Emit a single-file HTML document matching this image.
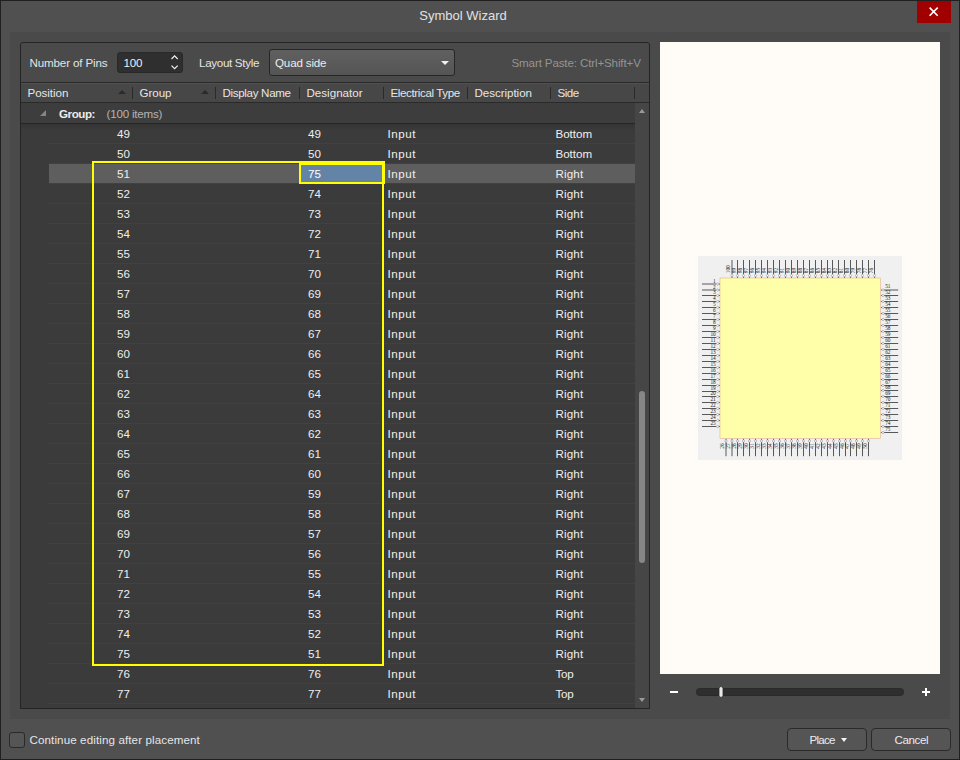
<!DOCTYPE html>
<html lang="en"><head><meta charset="utf-8"><title>Symbol Wizard</title>
<style>
*{box-sizing:border-box;margin:0;padding:0}
html,body{width:960px;height:760px;overflow:hidden}
body{position:relative;background:#505050;font-family:"Liberation Sans","DejaVu Sans",sans-serif;font-size:11.6px;color:#e4e4e4;}
.abs{position:absolute}
#winb{position:absolute;left:0;top:0;width:960px;height:760px;border:1px solid #202020;pointer-events:none;z-index:50}
#title{position:absolute;left:419px;top:7px;width:88px;height:17px;line-height:17px;font-size:13px;color:#e2e2e2;white-space:nowrap;text-align:center}
#close{position:absolute;left:917px;top:1px;width:34px;height:22px;background:#a00000}
#inner{position:absolute;left:10px;top:32px;width:940px;height:687px;background:#4a4a4a}
#panel{position:absolute;left:20px;top:42px;width:630px;height:667px;border:1px solid #242424;border-radius:3px 3px 0 0;background:#3b3b3b;overflow:hidden}
/* inside panel coordinates are page coords minus (21,43) */
#pin{position:absolute;left:-21px;top:-43px;width:960px;height:760px}
#toolbar{position:absolute;left:21px;top:43px;width:628px;height:39px;background:#4a4a4a}
#tline{position:absolute;left:21px;top:82px;width:628px;height:1px;background:#2a2a2a}
#header{position:absolute;left:21px;top:83px;width:628px;height:19px;background:#474747;border-top:1px solid #525252}
#hline{position:absolute;left:21px;top:102px;width:628px;height:1px;background:#2a2a2a}
#grow{position:absolute;left:21px;top:103px;width:614px;height:20px;background:#3d3d3d}
#gline{position:absolute;left:21px;top:123px;width:614px;height:1px;background:#252525}
#sbar{position:absolute;left:635px;top:103px;width:14px;height:605px;background:#464646}
#thumb{position:absolute;left:639px;top:391px;width:6px;height:172px;border-radius:3px;background:#868686}
.lbl{position:absolute;white-space:nowrap;height:20px;line-height:20px}
.hl{position:absolute;top:83px;height:19px;line-height:19px;white-space:nowrap;color:#e6e6e6}
.sep{position:absolute;top:87px;width:1px;height:12px;background:#2a2a2a}
.sarr{position:absolute;top:90px;width:0;height:0;border-left:4px solid transparent;border-right:4px solid transparent;border-bottom:4px solid #2a2a2a}
.row{position:absolute;left:49px;width:586px;height:20px;border-bottom:1px solid #414141;line-height:19px;color:#efefef}
#shade{position:absolute;left:21px;top:124px;width:614px;height:7px;background:linear-gradient(#353535,#3b3b3b)}
.row.sel{background:linear-gradient(#5e5e5e,#5e5e5e) 0 0/100% 19px no-repeat}
.row span{position:absolute;top:1px;white-space:nowrap}
.row span{top:0}
.c-pos{right:505px;text-align:right}
.c-des{left:259px}
.c-typ{left:338.4px;letter-spacing:0.55px}
.c-side{left:506.5px}
#ybox{position:absolute;left:92px;top:161px;width:292px;height:504.5px;border:2px solid #ffff00}
#ycell{position:absolute;left:299px;top:161px;width:86px;height:23px;border:2px solid #ffff00;border-top-width:4px;border-right-width:3px;background:#6384a6}
#preview{position:absolute;left:660px;top:42px;width:280px;height:632px;background:#fffcf8}
#preview svg{position:absolute;left:0;top:0}
#preview line{stroke:#585858;stroke-width:1}
#preview circle{fill:#fff;stroke:#777;stroke-width:0.45}
#preview text{font-family:"Liberation Serif",serif;font-size:5.3px;fill:#1a1a1a}
#track{position:absolute;left:696px;top:688px;width:208px;height:8px;border-radius:3.5px;background:#2f2f2f;border:1px solid #2a2a2a}
#knob{position:absolute;left:718.5px;top:686.4px;width:5px;height:11px;border-radius:2.5px;background:#e8e8e8;border:1px solid #2c2c2c}
.btn{position:absolute;top:728px;height:23px;width:80px;border:1px solid #2a2a2a;border-radius:4px;background:#555;color:#ececec}
.btn span{position:absolute;top:0px;height:21px;line-height:21px;white-space:nowrap}
#cb{position:absolute;left:9px;top:732px;width:16px;height:16px;border:1px solid #2a2a2a;border-radius:3px;background:#555}
</style></head><body>
<div id="title">Symbol Wizard</div>
<div id="close"><svg width="34" height="22" viewBox="0 0 34 22"><path d="M12.6 6.6 L20.7 14.7 M20.7 6.6 L12.6 14.7" stroke="#fff" stroke-width="1.6" fill="none"/></svg></div>
<div id="inner"></div>
<div id="panel"><div id="pin">
<div id="toolbar"></div><div id="tline"></div>
<div class="lbl" id="l-nop" style="letter-spacing:-0.14px;left:29.5px;top:53px">Number of Pins</div>
<div class="abs" id="spin" style="left:117px;top:52px;width:66px;height:21px;border:1px solid #282828;border-radius:3px;background:#2f2f2f"></div>
<div class="lbl" id="l-100" style="font-size:11.6px;letter-spacing:-0.2px;left:123.6px;top:53px;color:#f0f0f0">100</div>
<svg class="abs" style="left:170px;top:54px" width="10" height="17" viewBox="0 0 10 17"><path d="M1.5 5.0 L4.6 1.9 L7.7 5.0 M1.5 11.6 L4.6 14.7 L7.7 11.6" stroke="#f2f2f2" stroke-width="1.2" fill="none"/></svg>
<div class="lbl" id="l-ls" style="letter-spacing:-0.31px;left:199px;top:53px">Layout Style</div>
<div class="abs" id="sel" style="left:269px;top:49px;width:186px;height:27px;border:1px solid #262626;border-radius:3px;background:linear-gradient(#606060,#555)"></div>
<div class="lbl" id="l-qs" style="letter-spacing:-0.16px;left:275px;top:53px;color:#ececec">Quad side</div>
<div class="abs" style="left:441px;top:61px;width:0;height:0;border-left:4px solid transparent;border-right:4px solid transparent;border-top:4.5px solid #f0f0f0"></div>
<div class="lbl" id="l-sp" style="letter-spacing:-0.14px;left:511.5px;top:53px;color:#949494">Smart Paste: Ctrl+Shift+V</div>
<div id="header"></div><div id="hline"></div>
<div class="hl" id="h1" style="letter-spacing:-0.06px;left:27.5px">Position</div>
<div class="hl" id="h2" style="letter-spacing:-0.06px;left:139.5px">Group</div>
<div class="hl" id="h3" style="letter-spacing:-0.33px;left:222.5px">Display Name</div>
<div class="hl" id="h4" style="letter-spacing:0.00px;left:306.5px">Designator</div>
<div class="hl" id="h5" style="letter-spacing:-0.39px;left:390.5px">Electrical Type</div>
<div class="hl" id="h6" style="letter-spacing:-0.05px;left:474.5px">Description</div>
<div class="hl" id="h7" style="letter-spacing:-0.47px;left:557.5px">Side</div>
<div class="sep" style="left:132px"></div><div class="sep" style="left:215px"></div><div class="sep" style="left:299px"></div>
<div class="sep" style="left:383px"></div><div class="sep" style="left:467px"></div><div class="sep" style="left:550px"></div><div class="sep" style="left:634px"></div>
<div class="sarr" style="left:118px"></div><div class="sarr" style="left:201px"></div>
<div id="grow"></div><div id="gline"></div><div id="shade"></div>
<div class="abs" style="left:40px;top:110px;width:0;height:0;border-left:6px solid transparent;border-bottom:6px solid #858585"></div>
<div class="lbl" id="l-g" style="letter-spacing:-0.44px;left:59px;top:104px;font-weight:bold;color:#ececec">Group:</div>
<div class="lbl" id="l-gi" style="letter-spacing:-0.20px;left:106.5px;top:104px;color:#b4b4b4">(100 items)</div>
<div id="sbar"></div><div id="thumb"></div>
<div class="abs" style="left:639px;top:109px;width:0;height:0;border-left:3.5px solid transparent;border-right:3.5px solid transparent;border-bottom:4px solid #9a9a9a"></div>
<div class="abs" style="left:639px;top:698px;width:0;height:0;border-left:3.5px solid transparent;border-right:3.5px solid transparent;border-top:4px solid #9a9a9a"></div>
<div class="row first" style="top:124px"><span class="c-pos">49</span><span class="c-des">49</span><span class="c-typ">Input</span><span class="c-side" style="letter-spacing:-0.03px">Bottom</span></div>
<div class="row" style="top:144px"><span class="c-pos">50</span><span class="c-des">50</span><span class="c-typ">Input</span><span class="c-side" style="letter-spacing:-0.03px">Bottom</span></div>
<div class="row sel" style="top:164px"><span class="c-pos">51</span><span class="c-des">75</span><span class="c-typ">Input</span><span class="c-side" style="letter-spacing:0.14px">Right</span></div>
<div class="row" style="top:184px"><span class="c-pos">52</span><span class="c-des">74</span><span class="c-typ">Input</span><span class="c-side" style="letter-spacing:0.14px">Right</span></div>
<div class="row" style="top:204px"><span class="c-pos">53</span><span class="c-des">73</span><span class="c-typ">Input</span><span class="c-side" style="letter-spacing:0.14px">Right</span></div>
<div class="row" style="top:224px"><span class="c-pos">54</span><span class="c-des">72</span><span class="c-typ">Input</span><span class="c-side" style="letter-spacing:0.14px">Right</span></div>
<div class="row" style="top:244px"><span class="c-pos">55</span><span class="c-des">71</span><span class="c-typ">Input</span><span class="c-side" style="letter-spacing:0.14px">Right</span></div>
<div class="row" style="top:264px"><span class="c-pos">56</span><span class="c-des">70</span><span class="c-typ">Input</span><span class="c-side" style="letter-spacing:0.14px">Right</span></div>
<div class="row" style="top:284px"><span class="c-pos">57</span><span class="c-des">69</span><span class="c-typ">Input</span><span class="c-side" style="letter-spacing:0.14px">Right</span></div>
<div class="row" style="top:304px"><span class="c-pos">58</span><span class="c-des">68</span><span class="c-typ">Input</span><span class="c-side" style="letter-spacing:0.14px">Right</span></div>
<div class="row" style="top:324px"><span class="c-pos">59</span><span class="c-des">67</span><span class="c-typ">Input</span><span class="c-side" style="letter-spacing:0.14px">Right</span></div>
<div class="row" style="top:344px"><span class="c-pos">60</span><span class="c-des">66</span><span class="c-typ">Input</span><span class="c-side" style="letter-spacing:0.14px">Right</span></div>
<div class="row" style="top:364px"><span class="c-pos">61</span><span class="c-des">65</span><span class="c-typ">Input</span><span class="c-side" style="letter-spacing:0.14px">Right</span></div>
<div class="row" style="top:384px"><span class="c-pos">62</span><span class="c-des">64</span><span class="c-typ">Input</span><span class="c-side" style="letter-spacing:0.14px">Right</span></div>
<div class="row" style="top:404px"><span class="c-pos">63</span><span class="c-des">63</span><span class="c-typ">Input</span><span class="c-side" style="letter-spacing:0.14px">Right</span></div>
<div class="row" style="top:424px"><span class="c-pos">64</span><span class="c-des">62</span><span class="c-typ">Input</span><span class="c-side" style="letter-spacing:0.14px">Right</span></div>
<div class="row" style="top:444px"><span class="c-pos">65</span><span class="c-des">61</span><span class="c-typ">Input</span><span class="c-side" style="letter-spacing:0.14px">Right</span></div>
<div class="row" style="top:464px"><span class="c-pos">66</span><span class="c-des">60</span><span class="c-typ">Input</span><span class="c-side" style="letter-spacing:0.14px">Right</span></div>
<div class="row" style="top:484px"><span class="c-pos">67</span><span class="c-des">59</span><span class="c-typ">Input</span><span class="c-side" style="letter-spacing:0.14px">Right</span></div>
<div class="row" style="top:504px"><span class="c-pos">68</span><span class="c-des">58</span><span class="c-typ">Input</span><span class="c-side" style="letter-spacing:0.14px">Right</span></div>
<div class="row" style="top:524px"><span class="c-pos">69</span><span class="c-des">57</span><span class="c-typ">Input</span><span class="c-side" style="letter-spacing:0.14px">Right</span></div>
<div class="row" style="top:544px"><span class="c-pos">70</span><span class="c-des">56</span><span class="c-typ">Input</span><span class="c-side" style="letter-spacing:0.14px">Right</span></div>
<div class="row" style="top:564px"><span class="c-pos">71</span><span class="c-des">55</span><span class="c-typ">Input</span><span class="c-side" style="letter-spacing:0.14px">Right</span></div>
<div class="row" style="top:584px"><span class="c-pos">72</span><span class="c-des">54</span><span class="c-typ">Input</span><span class="c-side" style="letter-spacing:0.14px">Right</span></div>
<div class="row" style="top:604px"><span class="c-pos">73</span><span class="c-des">53</span><span class="c-typ">Input</span><span class="c-side" style="letter-spacing:0.14px">Right</span></div>
<div class="row" style="top:624px"><span class="c-pos">74</span><span class="c-des">52</span><span class="c-typ">Input</span><span class="c-side" style="letter-spacing:0.14px">Right</span></div>
<div class="row" style="top:644px"><span class="c-pos">75</span><span class="c-des">51</span><span class="c-typ">Input</span><span class="c-side" style="letter-spacing:0.14px">Right</span></div>
<div class="row" style="top:664px"><span class="c-pos">76</span><span class="c-des">76</span><span class="c-typ">Input</span><span class="c-side" style="letter-spacing:-0.23px">Top</span></div>
<div class="row" style="top:684px"><span class="c-pos">77</span><span class="c-des">77</span><span class="c-typ">Input</span><span class="c-side" style="letter-spacing:-0.23px">Top</span></div>
<div id="ycell"></div>
<div id="ybox"></div>
<div class="lbl" id="l-75" style="font-size:11.6px;left:308px;top:164px;color:#fff">75</div>
</div></div>
<div id="preview"><svg width="280" height="632" viewBox="0 0 280 632">
<rect x="38" y="214" width="204" height="204" fill="#f0f0f0"/>
<line x1="42" y1="242.00" x2="56.4" y2="242.00"/>
<circle cx="57.7" cy="242.00" r="1.1"/>
<line class="d" x1="58.9" y1="242.00" x2="60" y2="242.00"/>
<text x="55.7" y="240.50" text-anchor="end">1</text>
<line x1="42" y1="248.00" x2="56.4" y2="248.00"/>
<circle cx="57.7" cy="248.00" r="1.1"/>
<line class="d" x1="58.9" y1="248.00" x2="60" y2="248.00"/>
<text x="55.7" y="246.50" text-anchor="end">2</text>
<line x1="42" y1="253.50" x2="56.4" y2="253.50"/>
<circle cx="57.7" cy="253.50" r="1.1"/>
<line class="d" x1="58.9" y1="253.50" x2="60" y2="253.50"/>
<text x="55.7" y="252.00" text-anchor="end">3</text>
<line x1="42" y1="259.50" x2="56.4" y2="259.50"/>
<circle cx="57.7" cy="259.50" r="1.1"/>
<line class="d" x1="58.9" y1="259.50" x2="60" y2="259.50"/>
<text x="55.7" y="258.00" text-anchor="end">4</text>
<line x1="42" y1="265.50" x2="56.4" y2="265.50"/>
<circle cx="57.7" cy="265.50" r="1.1"/>
<line class="d" x1="58.9" y1="265.50" x2="60" y2="265.50"/>
<text x="55.7" y="264.00" text-anchor="end">5</text>
<line x1="42" y1="271.50" x2="56.4" y2="271.50"/>
<circle cx="57.7" cy="271.50" r="1.1"/>
<line class="d" x1="58.9" y1="271.50" x2="60" y2="271.50"/>
<text x="55.7" y="270.00" text-anchor="end">6</text>
<line x1="42" y1="277.50" x2="56.4" y2="277.50"/>
<circle cx="57.7" cy="277.50" r="1.1"/>
<line class="d" x1="58.9" y1="277.50" x2="60" y2="277.50"/>
<text x="55.7" y="276.00" text-anchor="end">7</text>
<line x1="42" y1="283.50" x2="56.4" y2="283.50"/>
<circle cx="57.7" cy="283.50" r="1.1"/>
<line class="d" x1="58.9" y1="283.50" x2="60" y2="283.50"/>
<text x="55.7" y="282.00" text-anchor="end">8</text>
<line x1="42" y1="289.50" x2="56.4" y2="289.50"/>
<circle cx="57.7" cy="289.50" r="1.1"/>
<line class="d" x1="58.9" y1="289.50" x2="60" y2="289.50"/>
<text x="55.7" y="288.00" text-anchor="end">9</text>
<line x1="42" y1="295.50" x2="56.4" y2="295.50"/>
<circle cx="57.7" cy="295.50" r="1.1"/>
<line class="d" x1="58.9" y1="295.50" x2="60" y2="295.50"/>
<text x="55.7" y="294.00" text-anchor="end">10</text>
<line x1="42" y1="301.50" x2="56.4" y2="301.50"/>
<circle cx="57.7" cy="301.50" r="1.1"/>
<line class="d" x1="58.9" y1="301.50" x2="60" y2="301.50"/>
<text x="55.7" y="300.00" text-anchor="end">11</text>
<line x1="42" y1="307.50" x2="56.4" y2="307.50"/>
<circle cx="57.7" cy="307.50" r="1.1"/>
<line class="d" x1="58.9" y1="307.50" x2="60" y2="307.50"/>
<text x="55.7" y="306.00" text-anchor="end">12</text>
<line x1="42" y1="313.50" x2="56.4" y2="313.50"/>
<circle cx="57.7" cy="313.50" r="1.1"/>
<line class="d" x1="58.9" y1="313.50" x2="60" y2="313.50"/>
<text x="55.7" y="312.00" text-anchor="end">13</text>
<line x1="42" y1="319.50" x2="56.4" y2="319.50"/>
<circle cx="57.7" cy="319.50" r="1.1"/>
<line class="d" x1="58.9" y1="319.50" x2="60" y2="319.50"/>
<text x="55.7" y="318.00" text-anchor="end">14</text>
<line x1="42" y1="325.50" x2="56.4" y2="325.50"/>
<circle cx="57.7" cy="325.50" r="1.1"/>
<line class="d" x1="58.9" y1="325.50" x2="60" y2="325.50"/>
<text x="55.7" y="324.00" text-anchor="end">15</text>
<line x1="42" y1="331.50" x2="56.4" y2="331.50"/>
<circle cx="57.7" cy="331.50" r="1.1"/>
<line class="d" x1="58.9" y1="331.50" x2="60" y2="331.50"/>
<text x="55.7" y="330.00" text-anchor="end">16</text>
<line x1="42" y1="337.50" x2="56.4" y2="337.50"/>
<circle cx="57.7" cy="337.50" r="1.1"/>
<line class="d" x1="58.9" y1="337.50" x2="60" y2="337.50"/>
<text x="55.7" y="336.00" text-anchor="end">17</text>
<line x1="42" y1="343.50" x2="56.4" y2="343.50"/>
<circle cx="57.7" cy="343.50" r="1.1"/>
<line class="d" x1="58.9" y1="343.50" x2="60" y2="343.50"/>
<text x="55.7" y="342.00" text-anchor="end">18</text>
<line x1="42" y1="349.50" x2="56.4" y2="349.50"/>
<circle cx="57.7" cy="349.50" r="1.1"/>
<line class="d" x1="58.9" y1="349.50" x2="60" y2="349.50"/>
<text x="55.7" y="348.00" text-anchor="end">19</text>
<line x1="42" y1="354.50" x2="56.4" y2="354.50"/>
<circle cx="57.7" cy="354.50" r="1.1"/>
<line class="d" x1="58.9" y1="354.50" x2="60" y2="354.50"/>
<text x="55.7" y="353.00" text-anchor="end">20</text>
<line x1="42" y1="360.50" x2="56.4" y2="360.50"/>
<circle cx="57.7" cy="360.50" r="1.1"/>
<line class="d" x1="58.9" y1="360.50" x2="60" y2="360.50"/>
<text x="55.7" y="359.00" text-anchor="end">21</text>
<line x1="42" y1="366.50" x2="56.4" y2="366.50"/>
<circle cx="57.7" cy="366.50" r="1.1"/>
<line class="d" x1="58.9" y1="366.50" x2="60" y2="366.50"/>
<text x="55.7" y="365.00" text-anchor="end">22</text>
<line x1="42" y1="372.50" x2="56.4" y2="372.50"/>
<circle cx="57.7" cy="372.50" r="1.1"/>
<line class="d" x1="58.9" y1="372.50" x2="60" y2="372.50"/>
<text x="55.7" y="371.00" text-anchor="end">23</text>
<line x1="42" y1="378.50" x2="56.4" y2="378.50"/>
<circle cx="57.7" cy="378.50" r="1.1"/>
<line class="d" x1="58.9" y1="378.50" x2="60" y2="378.50"/>
<text x="55.7" y="377.00" text-anchor="end">24</text>
<line x1="42" y1="384.50" x2="56.4" y2="384.50"/>
<circle cx="57.7" cy="384.50" r="1.1"/>
<line class="d" x1="58.9" y1="384.50" x2="60" y2="384.50"/>
<text x="55.7" y="383.00" text-anchor="end">25</text>
<line x1="224.2" y1="248.00" x2="238.2" y2="248.00"/>
<circle cx="223.0" cy="248.00" r="1.1"/>
<line class="d" x1="220.7" y1="248.00" x2="221.8" y2="248.00"/>
<text x="225.2" y="246.40">51</text>
<line x1="224.2" y1="253.50" x2="238.2" y2="253.50"/>
<circle cx="223.0" cy="253.50" r="1.1"/>
<line class="d" x1="220.7" y1="253.50" x2="221.8" y2="253.50"/>
<text x="225.2" y="251.90">52</text>
<line x1="224.2" y1="259.50" x2="238.2" y2="259.50"/>
<circle cx="223.0" cy="259.50" r="1.1"/>
<line class="d" x1="220.7" y1="259.50" x2="221.8" y2="259.50"/>
<text x="225.2" y="257.90">53</text>
<line x1="224.2" y1="265.50" x2="238.2" y2="265.50"/>
<circle cx="223.0" cy="265.50" r="1.1"/>
<line class="d" x1="220.7" y1="265.50" x2="221.8" y2="265.50"/>
<text x="225.2" y="263.90">54</text>
<line x1="224.2" y1="271.50" x2="238.2" y2="271.50"/>
<circle cx="223.0" cy="271.50" r="1.1"/>
<line class="d" x1="220.7" y1="271.50" x2="221.8" y2="271.50"/>
<text x="225.2" y="269.90">55</text>
<line x1="224.2" y1="277.50" x2="238.2" y2="277.50"/>
<circle cx="223.0" cy="277.50" r="1.1"/>
<line class="d" x1="220.7" y1="277.50" x2="221.8" y2="277.50"/>
<text x="225.2" y="275.90">56</text>
<line x1="224.2" y1="283.50" x2="238.2" y2="283.50"/>
<circle cx="223.0" cy="283.50" r="1.1"/>
<line class="d" x1="220.7" y1="283.50" x2="221.8" y2="283.50"/>
<text x="225.2" y="281.90">57</text>
<line x1="224.2" y1="289.50" x2="238.2" y2="289.50"/>
<circle cx="223.0" cy="289.50" r="1.1"/>
<line class="d" x1="220.7" y1="289.50" x2="221.8" y2="289.50"/>
<text x="225.2" y="287.90">58</text>
<line x1="224.2" y1="295.50" x2="238.2" y2="295.50"/>
<circle cx="223.0" cy="295.50" r="1.1"/>
<line class="d" x1="220.7" y1="295.50" x2="221.8" y2="295.50"/>
<text x="225.2" y="293.90">59</text>
<line x1="224.2" y1="301.50" x2="238.2" y2="301.50"/>
<circle cx="223.0" cy="301.50" r="1.1"/>
<line class="d" x1="220.7" y1="301.50" x2="221.8" y2="301.50"/>
<text x="225.2" y="299.90">60</text>
<line x1="224.2" y1="307.50" x2="238.2" y2="307.50"/>
<circle cx="223.0" cy="307.50" r="1.1"/>
<line class="d" x1="220.7" y1="307.50" x2="221.8" y2="307.50"/>
<text x="225.2" y="305.90">61</text>
<line x1="224.2" y1="313.50" x2="238.2" y2="313.50"/>
<circle cx="223.0" cy="313.50" r="1.1"/>
<line class="d" x1="220.7" y1="313.50" x2="221.8" y2="313.50"/>
<text x="225.2" y="311.90">62</text>
<line x1="224.2" y1="319.50" x2="238.2" y2="319.50"/>
<circle cx="223.0" cy="319.50" r="1.1"/>
<line class="d" x1="220.7" y1="319.50" x2="221.8" y2="319.50"/>
<text x="225.2" y="317.90">63</text>
<line x1="224.2" y1="325.50" x2="238.2" y2="325.50"/>
<circle cx="223.0" cy="325.50" r="1.1"/>
<line class="d" x1="220.7" y1="325.50" x2="221.8" y2="325.50"/>
<text x="225.2" y="323.90">64</text>
<line x1="224.2" y1="331.50" x2="238.2" y2="331.50"/>
<circle cx="223.0" cy="331.50" r="1.1"/>
<line class="d" x1="220.7" y1="331.50" x2="221.8" y2="331.50"/>
<text x="225.2" y="329.90">65</text>
<line x1="224.2" y1="337.50" x2="238.2" y2="337.50"/>
<circle cx="223.0" cy="337.50" r="1.1"/>
<line class="d" x1="220.7" y1="337.50" x2="221.8" y2="337.50"/>
<text x="225.2" y="335.90">66</text>
<line x1="224.2" y1="343.50" x2="238.2" y2="343.50"/>
<circle cx="223.0" cy="343.50" r="1.1"/>
<line class="d" x1="220.7" y1="343.50" x2="221.8" y2="343.50"/>
<text x="225.2" y="341.90">67</text>
<line x1="224.2" y1="348.50" x2="238.2" y2="348.50"/>
<circle cx="223.0" cy="348.50" r="1.1"/>
<line class="d" x1="220.7" y1="348.50" x2="221.8" y2="348.50"/>
<text x="225.2" y="346.90">68</text>
<line x1="224.2" y1="354.50" x2="238.2" y2="354.50"/>
<circle cx="223.0" cy="354.50" r="1.1"/>
<line class="d" x1="220.7" y1="354.50" x2="221.8" y2="354.50"/>
<text x="225.2" y="352.90">69</text>
<line x1="224.2" y1="360.50" x2="238.2" y2="360.50"/>
<circle cx="223.0" cy="360.50" r="1.1"/>
<line class="d" x1="220.7" y1="360.50" x2="221.8" y2="360.50"/>
<text x="225.2" y="358.90">70</text>
<line x1="224.2" y1="366.50" x2="238.2" y2="366.50"/>
<circle cx="223.0" cy="366.50" r="1.1"/>
<line class="d" x1="220.7" y1="366.50" x2="221.8" y2="366.50"/>
<text x="225.2" y="364.90">71</text>
<line x1="224.2" y1="372.50" x2="238.2" y2="372.50"/>
<circle cx="223.0" cy="372.50" r="1.1"/>
<line class="d" x1="220.7" y1="372.50" x2="221.8" y2="372.50"/>
<text x="225.2" y="370.90">72</text>
<line x1="224.2" y1="378.50" x2="238.2" y2="378.50"/>
<circle cx="223.0" cy="378.50" r="1.1"/>
<line class="d" x1="220.7" y1="378.50" x2="221.8" y2="378.50"/>
<text x="225.2" y="376.90">73</text>
<line x1="224.2" y1="384.50" x2="238.2" y2="384.50"/>
<circle cx="223.0" cy="384.50" r="1.1"/>
<line class="d" x1="220.7" y1="384.50" x2="221.8" y2="384.50"/>
<text x="225.2" y="382.90">74</text>
<line x1="224.2" y1="390.50" x2="238.2" y2="390.50"/>
<circle cx="223.0" cy="390.50" r="1.1"/>
<line class="d" x1="220.7" y1="390.50" x2="221.8" y2="390.50"/>
<text x="225.2" y="388.90">75</text>
<line x1="72.00" y1="218" x2="72.00" y2="232.4"/>
<circle cx="72.00" cy="233.6" r="1.1"/>
<line class="d" x1="72.00" y1="234.8" x2="72.00" y2="236"/>
<text transform="translate(70.30,231.2) rotate(-90)">100</text>
<line x1="77.50" y1="218" x2="77.50" y2="232.4"/>
<circle cx="77.50" cy="233.6" r="1.1"/>
<line class="d" x1="77.50" y1="234.8" x2="77.50" y2="236"/>
<text transform="translate(75.80,231.2) rotate(-90)">99</text>
<line x1="83.50" y1="218" x2="83.50" y2="232.4"/>
<circle cx="83.50" cy="233.6" r="1.1"/>
<line class="d" x1="83.50" y1="234.8" x2="83.50" y2="236"/>
<text transform="translate(81.80,231.2) rotate(-90)">98</text>
<line x1="89.50" y1="218" x2="89.50" y2="232.4"/>
<circle cx="89.50" cy="233.6" r="1.1"/>
<line class="d" x1="89.50" y1="234.8" x2="89.50" y2="236"/>
<text transform="translate(87.80,231.2) rotate(-90)">97</text>
<line x1="95.50" y1="218" x2="95.50" y2="232.4"/>
<circle cx="95.50" cy="233.6" r="1.1"/>
<line class="d" x1="95.50" y1="234.8" x2="95.50" y2="236"/>
<text transform="translate(93.80,231.2) rotate(-90)">96</text>
<line x1="101.50" y1="218" x2="101.50" y2="232.4"/>
<circle cx="101.50" cy="233.6" r="1.1"/>
<line class="d" x1="101.50" y1="234.8" x2="101.50" y2="236"/>
<text transform="translate(99.80,231.2) rotate(-90)">95</text>
<line x1="107.50" y1="218" x2="107.50" y2="232.4"/>
<circle cx="107.50" cy="233.6" r="1.1"/>
<line class="d" x1="107.50" y1="234.8" x2="107.50" y2="236"/>
<text transform="translate(105.80,231.2) rotate(-90)">94</text>
<line x1="113.50" y1="218" x2="113.50" y2="232.4"/>
<circle cx="113.50" cy="233.6" r="1.1"/>
<line class="d" x1="113.50" y1="234.8" x2="113.50" y2="236"/>
<text transform="translate(111.80,231.2) rotate(-90)">93</text>
<line x1="119.50" y1="218" x2="119.50" y2="232.4"/>
<circle cx="119.50" cy="233.6" r="1.1"/>
<line class="d" x1="119.50" y1="234.8" x2="119.50" y2="236"/>
<text transform="translate(117.80,231.2) rotate(-90)">92</text>
<line x1="125.50" y1="218" x2="125.50" y2="232.4"/>
<circle cx="125.50" cy="233.6" r="1.1"/>
<line class="d" x1="125.50" y1="234.8" x2="125.50" y2="236"/>
<text transform="translate(123.80,231.2) rotate(-90)">91</text>
<line x1="131.50" y1="218" x2="131.50" y2="232.4"/>
<circle cx="131.50" cy="233.6" r="1.1"/>
<line class="d" x1="131.50" y1="234.8" x2="131.50" y2="236"/>
<text transform="translate(129.80,231.2) rotate(-90)">90</text>
<line x1="137.50" y1="218" x2="137.50" y2="232.4"/>
<circle cx="137.50" cy="233.6" r="1.1"/>
<line class="d" x1="137.50" y1="234.8" x2="137.50" y2="236"/>
<text transform="translate(135.80,231.2) rotate(-90)">89</text>
<line x1="143.50" y1="218" x2="143.50" y2="232.4"/>
<circle cx="143.50" cy="233.6" r="1.1"/>
<line class="d" x1="143.50" y1="234.8" x2="143.50" y2="236"/>
<text transform="translate(141.80,231.2) rotate(-90)">88</text>
<line x1="149.50" y1="218" x2="149.50" y2="232.4"/>
<circle cx="149.50" cy="233.6" r="1.1"/>
<line class="d" x1="149.50" y1="234.8" x2="149.50" y2="236"/>
<text transform="translate(147.80,231.2) rotate(-90)">87</text>
<line x1="155.50" y1="218" x2="155.50" y2="232.4"/>
<circle cx="155.50" cy="233.6" r="1.1"/>
<line class="d" x1="155.50" y1="234.8" x2="155.50" y2="236"/>
<text transform="translate(153.80,231.2) rotate(-90)">86</text>
<line x1="161.50" y1="218" x2="161.50" y2="232.4"/>
<circle cx="161.50" cy="233.6" r="1.1"/>
<line class="d" x1="161.50" y1="234.8" x2="161.50" y2="236"/>
<text transform="translate(159.80,231.2) rotate(-90)">85</text>
<line x1="167.50" y1="218" x2="167.50" y2="232.4"/>
<circle cx="167.50" cy="233.6" r="1.1"/>
<line class="d" x1="167.50" y1="234.8" x2="167.50" y2="236"/>
<text transform="translate(165.80,231.2) rotate(-90)">84</text>
<line x1="172.50" y1="218" x2="172.50" y2="232.4"/>
<circle cx="172.50" cy="233.6" r="1.1"/>
<line class="d" x1="172.50" y1="234.8" x2="172.50" y2="236"/>
<text transform="translate(170.80,231.2) rotate(-90)">83</text>
<line x1="178.50" y1="218" x2="178.50" y2="232.4"/>
<circle cx="178.50" cy="233.6" r="1.1"/>
<line class="d" x1="178.50" y1="234.8" x2="178.50" y2="236"/>
<text transform="translate(176.80,231.2) rotate(-90)">82</text>
<line x1="184.50" y1="218" x2="184.50" y2="232.4"/>
<circle cx="184.50" cy="233.6" r="1.1"/>
<line class="d" x1="184.50" y1="234.8" x2="184.50" y2="236"/>
<text transform="translate(182.80,231.2) rotate(-90)">81</text>
<line x1="190.50" y1="218" x2="190.50" y2="232.4"/>
<circle cx="190.50" cy="233.6" r="1.1"/>
<line class="d" x1="190.50" y1="234.8" x2="190.50" y2="236"/>
<text transform="translate(188.80,231.2) rotate(-90)">80</text>
<line x1="196.50" y1="218" x2="196.50" y2="232.4"/>
<circle cx="196.50" cy="233.6" r="1.1"/>
<line class="d" x1="196.50" y1="234.8" x2="196.50" y2="236"/>
<text transform="translate(194.80,231.2) rotate(-90)">79</text>
<line x1="202.50" y1="218" x2="202.50" y2="232.4"/>
<circle cx="202.50" cy="233.6" r="1.1"/>
<line class="d" x1="202.50" y1="234.8" x2="202.50" y2="236"/>
<text transform="translate(200.80,231.2) rotate(-90)">78</text>
<line x1="208.50" y1="218" x2="208.50" y2="232.4"/>
<circle cx="208.50" cy="233.6" r="1.1"/>
<line class="d" x1="208.50" y1="234.8" x2="208.50" y2="236"/>
<text transform="translate(206.80,231.2) rotate(-90)">77</text>
<line x1="214.50" y1="218" x2="214.50" y2="232.4"/>
<circle cx="214.50" cy="233.6" r="1.1"/>
<line class="d" x1="214.50" y1="234.8" x2="214.50" y2="236"/>
<text transform="translate(212.80,231.2) rotate(-90)">76</text>
<line x1="66.00" y1="400.2" x2="66.00" y2="414.2"/>
<circle cx="66.00" cy="399.0" r="1.1"/>
<line class="d" x1="66.00" y1="396.5" x2="66.00" y2="397.8"/>
<text transform="translate(64.30,401.4) rotate(-90)" text-anchor="end">26</text>
<line x1="72.00" y1="400.2" x2="72.00" y2="414.2"/>
<circle cx="72.00" cy="399.0" r="1.1"/>
<line class="d" x1="72.00" y1="396.5" x2="72.00" y2="397.8"/>
<text transform="translate(70.30,401.4) rotate(-90)" text-anchor="end">27</text>
<line x1="77.50" y1="400.2" x2="77.50" y2="414.2"/>
<circle cx="77.50" cy="399.0" r="1.1"/>
<line class="d" x1="77.50" y1="396.5" x2="77.50" y2="397.8"/>
<text transform="translate(75.80,401.4) rotate(-90)" text-anchor="end">28</text>
<line x1="83.50" y1="400.2" x2="83.50" y2="414.2"/>
<circle cx="83.50" cy="399.0" r="1.1"/>
<line class="d" x1="83.50" y1="396.5" x2="83.50" y2="397.8"/>
<text transform="translate(81.80,401.4) rotate(-90)" text-anchor="end">29</text>
<line x1="89.50" y1="400.2" x2="89.50" y2="414.2"/>
<circle cx="89.50" cy="399.0" r="1.1"/>
<line class="d" x1="89.50" y1="396.5" x2="89.50" y2="397.8"/>
<text transform="translate(87.80,401.4) rotate(-90)" text-anchor="end">30</text>
<line x1="95.50" y1="400.2" x2="95.50" y2="414.2"/>
<circle cx="95.50" cy="399.0" r="1.1"/>
<line class="d" x1="95.50" y1="396.5" x2="95.50" y2="397.8"/>
<text transform="translate(93.80,401.4) rotate(-90)" text-anchor="end">31</text>
<line x1="101.50" y1="400.2" x2="101.50" y2="414.2"/>
<circle cx="101.50" cy="399.0" r="1.1"/>
<line class="d" x1="101.50" y1="396.5" x2="101.50" y2="397.8"/>
<text transform="translate(99.80,401.4) rotate(-90)" text-anchor="end">32</text>
<line x1="107.50" y1="400.2" x2="107.50" y2="414.2"/>
<circle cx="107.50" cy="399.0" r="1.1"/>
<line class="d" x1="107.50" y1="396.5" x2="107.50" y2="397.8"/>
<text transform="translate(105.80,401.4) rotate(-90)" text-anchor="end">33</text>
<line x1="113.50" y1="400.2" x2="113.50" y2="414.2"/>
<circle cx="113.50" cy="399.0" r="1.1"/>
<line class="d" x1="113.50" y1="396.5" x2="113.50" y2="397.8"/>
<text transform="translate(111.80,401.4) rotate(-90)" text-anchor="end">34</text>
<line x1="119.50" y1="400.2" x2="119.50" y2="414.2"/>
<circle cx="119.50" cy="399.0" r="1.1"/>
<line class="d" x1="119.50" y1="396.5" x2="119.50" y2="397.8"/>
<text transform="translate(117.80,401.4) rotate(-90)" text-anchor="end">35</text>
<line x1="125.50" y1="400.2" x2="125.50" y2="414.2"/>
<circle cx="125.50" cy="399.0" r="1.1"/>
<line class="d" x1="125.50" y1="396.5" x2="125.50" y2="397.8"/>
<text transform="translate(123.80,401.4) rotate(-90)" text-anchor="end">36</text>
<line x1="131.50" y1="400.2" x2="131.50" y2="414.2"/>
<circle cx="131.50" cy="399.0" r="1.1"/>
<line class="d" x1="131.50" y1="396.5" x2="131.50" y2="397.8"/>
<text transform="translate(129.80,401.4) rotate(-90)" text-anchor="end">37</text>
<line x1="137.50" y1="400.2" x2="137.50" y2="414.2"/>
<circle cx="137.50" cy="399.0" r="1.1"/>
<line class="d" x1="137.50" y1="396.5" x2="137.50" y2="397.8"/>
<text transform="translate(135.80,401.4) rotate(-90)" text-anchor="end">38</text>
<line x1="143.50" y1="400.2" x2="143.50" y2="414.2"/>
<circle cx="143.50" cy="399.0" r="1.1"/>
<line class="d" x1="143.50" y1="396.5" x2="143.50" y2="397.8"/>
<text transform="translate(141.80,401.4) rotate(-90)" text-anchor="end">39</text>
<line x1="149.50" y1="400.2" x2="149.50" y2="414.2"/>
<circle cx="149.50" cy="399.0" r="1.1"/>
<line class="d" x1="149.50" y1="396.5" x2="149.50" y2="397.8"/>
<text transform="translate(147.80,401.4) rotate(-90)" text-anchor="end">40</text>
<line x1="155.50" y1="400.2" x2="155.50" y2="414.2"/>
<circle cx="155.50" cy="399.0" r="1.1"/>
<line class="d" x1="155.50" y1="396.5" x2="155.50" y2="397.8"/>
<text transform="translate(153.80,401.4) rotate(-90)" text-anchor="end">41</text>
<line x1="161.50" y1="400.2" x2="161.50" y2="414.2"/>
<circle cx="161.50" cy="399.0" r="1.1"/>
<line class="d" x1="161.50" y1="396.5" x2="161.50" y2="397.8"/>
<text transform="translate(159.80,401.4) rotate(-90)" text-anchor="end">42</text>
<line x1="167.50" y1="400.2" x2="167.50" y2="414.2"/>
<circle cx="167.50" cy="399.0" r="1.1"/>
<line class="d" x1="167.50" y1="396.5" x2="167.50" y2="397.8"/>
<text transform="translate(165.80,401.4) rotate(-90)" text-anchor="end">43</text>
<line x1="173.50" y1="400.2" x2="173.50" y2="414.2"/>
<circle cx="173.50" cy="399.0" r="1.1"/>
<line class="d" x1="173.50" y1="396.5" x2="173.50" y2="397.8"/>
<text transform="translate(171.80,401.4) rotate(-90)" text-anchor="end">44</text>
<line x1="179.50" y1="400.2" x2="179.50" y2="414.2"/>
<circle cx="179.50" cy="399.0" r="1.1"/>
<line class="d" x1="179.50" y1="396.5" x2="179.50" y2="397.8"/>
<text transform="translate(177.80,401.4) rotate(-90)" text-anchor="end">45</text>
<line x1="185.50" y1="400.2" x2="185.50" y2="414.2"/>
<circle cx="185.50" cy="399.0" r="1.1"/>
<line class="d" x1="185.50" y1="396.5" x2="185.50" y2="397.8"/>
<text transform="translate(183.80,401.4) rotate(-90)" text-anchor="end">46</text>
<line x1="190.50" y1="400.2" x2="190.50" y2="414.2"/>
<circle cx="190.50" cy="399.0" r="1.1"/>
<line class="d" x1="190.50" y1="396.5" x2="190.50" y2="397.8"/>
<text transform="translate(188.80,401.4) rotate(-90)" text-anchor="end">47</text>
<line x1="196.50" y1="400.2" x2="196.50" y2="414.2"/>
<circle cx="196.50" cy="399.0" r="1.1"/>
<line class="d" x1="196.50" y1="396.5" x2="196.50" y2="397.8"/>
<text transform="translate(194.80,401.4) rotate(-90)" text-anchor="end">48</text>
<line x1="202.50" y1="400.2" x2="202.50" y2="414.2"/>
<circle cx="202.50" cy="399.0" r="1.1"/>
<line class="d" x1="202.50" y1="396.5" x2="202.50" y2="397.8"/>
<text transform="translate(200.80,401.4) rotate(-90)" text-anchor="end">49</text>
<line x1="208.50" y1="400.2" x2="208.50" y2="414.2"/>
<circle cx="208.50" cy="399.0" r="1.1"/>
<line class="d" x1="208.50" y1="396.5" x2="208.50" y2="397.8"/>
<text transform="translate(206.80,401.4) rotate(-90)" text-anchor="end">50</text>
<rect x="60" y="236" width="160.7" height="160.5" fill="#ffffaa" stroke="#dca0a0" stroke-width="0.5"/>
</svg></div>
<div class="abs" style="left:669.8px;top:690.9px;width:8.4px;height:2.4px;background:#fff"></div>
<div id="track"></div><svg class="abs" style="left:716px;top:684px" width="10" height="16" viewBox="0 0 10 16"><rect x="3.0" y="2.6" width="4.0" height="10.7" rx="1.9" fill="#e9e9e9" stroke="#2c2c2c" stroke-width="0.8"/></svg>
<div class="abs" style="left:921.7px;top:690.9px;width:8.4px;height:2.4px;background:#fff"></div>
<div class="abs" style="left:924.7px;top:687.9px;width:2.6px;height:8.2px;background:#fff"></div>
<div id="cb"></div>
<div class="lbl" id="l-ce" style="letter-spacing:0.11px;left:29.5px;top:730px;color:#e6e6e6">Continue editing after placement</div>
<div class="btn" style="left:787px"><span id="b-place" style="letter-spacing:-0.78px;left:21.5px">Place</span><i class="abs" style="left:53px;top:9px;width:0;height:0;border-left:3.8px solid transparent;border-right:3.8px solid transparent;border-top:4.3px solid #f4f4f4"></i></div>
<div class="btn" style="left:871px"><span id="b-cancel" style="letter-spacing:-0.41px;left:22.5px">Cancel</span></div>
<div id="winb"></div>
</body></html>
